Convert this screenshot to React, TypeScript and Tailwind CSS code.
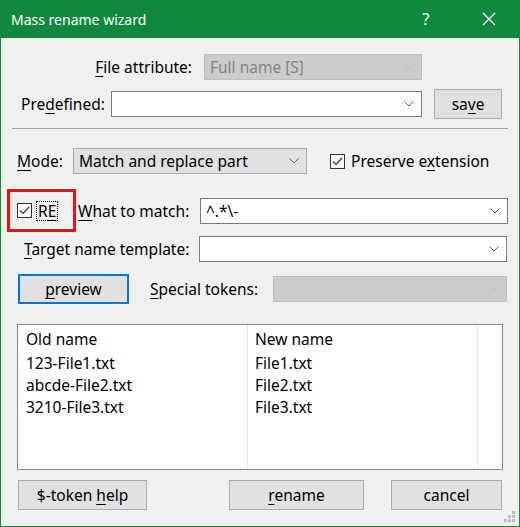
import React from "react";

const font = { fontFamily: '"Noto Sans", "Open Sans", sans-serif' };

const Chevron = ({ disabled }: { disabled?: boolean }) => (
  <svg width="10" height="6" viewBox="0 0 10 6" className="shrink-0">
    <path
      d="M0.5 0.5 L5 5 L9.5 0.5"
      fill="none"
      stroke={disabled ? "#bcbcbc" : "#606060"}
      strokeWidth="1"
    />
  </svg>
);

const U = ({ children }: { children: React.ReactNode }) => (
  <span className="underline underline-offset-[3px] decoration-1">{children}</span>
);

const Combo = ({
  value,
  className,
  variant = "edit",
}: {
  value?: string;
  className: string;
  variant?: "edit" | "list" | "disabled";
}) => {
  const styles = {
    edit: "bg-white border-[#7a7a7a] text-black",
    list: "bg-[#e1e1e1] border-[#adadad] text-black",
    disabled: "bg-[#cccccc] border-[#bfbfbf] text-[#838383]",
  };
  return (
    <div
      className={`flex items-center justify-between border pl-[5px] pr-[7px] ${styles[variant]} ${className}`}
    >
      <span className="whitespace-nowrap leading-none pt-[2px]">{value}</span>
      <Chevron disabled={variant === "disabled"} />
    </div>
  );
};

const CheckBox = () => (
  <div className="w-[15px] h-[15px] border border-[#333333] bg-white flex items-center justify-center shrink-0">
    <svg width="11" height="9" viewBox="0 0 11 9">
      <path d="M1 4.5 L4 7.5 L10 1" fill="none" stroke="#333333" strokeWidth="1.2" />
    </svg>
  </div>
);

const Button = ({
  children,
  className,
  focused,
}: {
  children: React.ReactNode;
  className: string;
  focused?: boolean;
}) => (
  <div
    className={`flex items-center justify-center bg-[#e1e1e1] ${
      focused ? "border-2 border-[#0078d7]" : "border border-[#adadad]"
    } ${className}`}
  >
    <span className="whitespace-nowrap pt-[2px]">{children}</span>
  </div>
);

const rows = [
  ["123-File1.txt", "File1.txt"],
  ["abcde-File2.txt", "File2.txt"],
  ["3210-File3.txt", "File3.txt"],
];

export default function App() {
  return (
    <div
      className="w-[520px] h-[527px] flex flex-col bg-[#f0f0f0] text-[15.5px] text-black border-x border-b border-[#10893e] overflow-hidden relative"
      style={font}
    >
      <div className="h-[38px] bg-[#10893e] text-white flex items-center shrink-0 -mx-px">
        <span className="ml-[11px] flex-1 text-[14px]">Mass rename wizard</span>
        <span className="w-[20px] text-center text-[16px] mr-[45px]">?</span>
        <svg width="16" height="16" viewBox="0 0 16 16" className="mr-[23px]">
          <path d="M2 2 L14 14 M14 2 L2 14" stroke="white" strokeWidth="1.2" />
        </svg>
      </div>

      {/* file attribute */}
      <div className="flex items-center mt-[16px] h-[26px]">
        <span className="w-[191px] text-right whitespace-nowrap pt-[2px]">
          <U>F</U>ile attribute:
        </span>
        <Combo value="Full name [S]" variant="disabled" className="ml-[12px] w-[218px] h-[26px]" />
      </div>

      {/* predefined */}
      <div className="flex items-center mt-[9px] h-[30px]">
        <span className="ml-[20px] w-[90px] whitespace-nowrap pt-[2px]">
          Pre<U>d</U>efined:
        </span>
        <Combo className="w-[311px] h-[26px]" />
        <Button className="ml-[12px] w-[68px] h-[30px]">
          sa<U>v</U>e
        </Button>
      </div>

      <div className="mt-[9px] mx-[11px] h-px bg-[#a0a0a0]" />

      {/* mode */}
      <div className="flex items-center mt-[19px] h-[26px]">
        <span className="ml-[16px] w-[56px] whitespace-nowrap pt-[2px]">
          <U>M</U>ode:
        </span>
        <Combo value="Match and replace part" variant="list" className="w-[234px] h-[26px]" />
        <div className="ml-[23px] flex items-center gap-[6px]">
          <CheckBox />
          <span className="whitespace-nowrap pt-[2px]">
            Preserve e<U>x</U>tension
          </span>
        </div>
      </div>

      {/* RE / what to match */}
      <div className="flex items-center mt-[15px] h-[43px]">
        <div className="ml-[6px] w-[69px] h-[43px] border-[3px] border-[#ff0a0a] flex items-center pl-[7px]">
          <CheckBox />
          <span className="ml-[4px] px-[1px] border border-dotted border-black leading-[17px] pt-px">
            R<U>E</U>
          </span>
        </div>
        <span className="ml-[2px] w-[122px] whitespace-nowrap pt-[2px]">
          <U>W</U>hat to match:
        </span>
        <Combo value="^.*\-" className="w-[308px] h-[26px]" />
      </div>

      {/* target template */}
      <div className="flex items-center mt-[4px] h-[26px]">
        <span className="ml-[23px] w-[175px] whitespace-nowrap pt-[2px]">
          <U>T</U>arget name template:
        </span>
        <Combo className="w-[308px] h-[26px]" />
      </div>

      {/* preview / special tokens */}
      <div className="flex items-center mt-[12px] h-[30px]">
        <Button focused className="ml-[17px] w-[111px] h-[30px]">
          <U>p</U>review
        </Button>
        <span className="ml-[21px] w-[123px] whitespace-nowrap pt-[2px]">
          <U>S</U>pecial tokens:
        </span>
        <Combo variant="disabled" className="w-[234px] h-[26px]" />
      </div>

      {/* list */}
      <div className="mt-[20px] ml-[16px] w-[486px] h-[146px] border border-[#828790] bg-white flex">
        <div className="w-[230px] border-r border-[#e5e5e5] flex flex-col pt-[2px]">
          <div className="h-[26px] flex items-center pl-[8px]">Old name</div>
          {rows.map(([o]) => (
            <div key={o} className="h-[22px] flex items-center pl-[8px]">
              {o}
            </div>
          ))}
        </div>
        <div className="w-[230px] border-r border-[#e5e5e5] flex flex-col pt-[2px]">
          <div className="h-[26px] flex items-center pl-[7px]">New name</div>
          {rows.map(([o, n]) => (
            <div key={o} className="h-[22px] flex items-center pl-[7px]">
              {n}
            </div>
          ))}
        </div>
      </div>

      {/* bottom buttons */}
      <div className="flex items-center mt-[10px] h-[30px]">
        <Button className="ml-[17px] w-[129px] h-[30px]">
          $-token <U>h</U>elp
        </Button>
        <Button className="ml-[82px] w-[135px] h-[30px]">
          <U>r</U>ename
        </Button>
        <Button className="ml-[27px] w-[111px] h-[30px]">cancel</Button>
      </div>

      <svg width="12" height="12" viewBox="0 0 12 12" className="absolute right-[3px] bottom-[3px]">
        {[
          [8, 0],
          [4, 4],
          [8, 4],
          [0, 8],
          [4, 8],
          [8, 8],
        ].map(([x, y]) => (
          <rect key={`${x}-${y}`} x={x} y={y} width="3" height="3" fill="#bcbcbc" />
        ))}
      </svg>
    </div>
  );
}
